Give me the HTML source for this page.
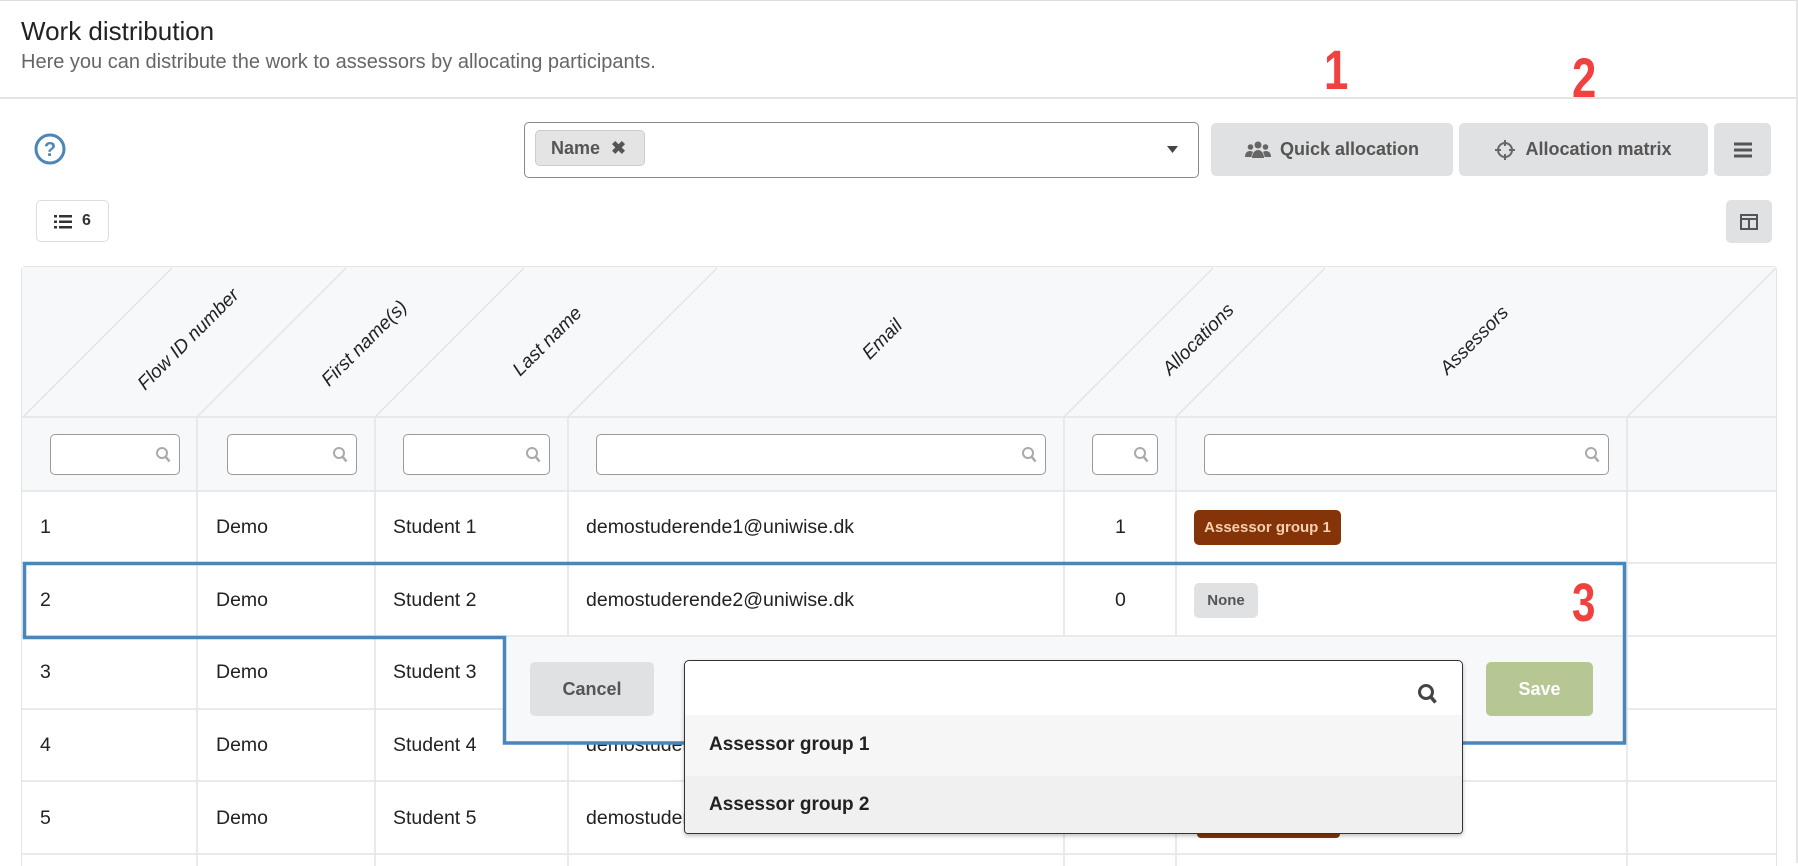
<!DOCTYPE html>
<html><head><meta charset="utf-8">
<style>
*{box-sizing:border-box;margin:0;padding:0}
body{width:1798px;height:863px;overflow:hidden;background:#fff;font-family:"Liberation Sans",sans-serif;color:#222;position:relative}
.abs{position:absolute}
.btn{position:absolute;background:#e0e1e3;border-radius:5px;color:#555;font-weight:bold;font-size:18px;display:flex;align-items:center;justify-content:center}
.inp{position:absolute;height:41px;top:434px;border:1px solid #9a9a9a;border-radius:5px;background:#fff}
.inp svg{position:absolute;right:8px;top:11px}
.cell{position:absolute;font-size:19.5px;color:#222}
.hl{position:absolute;transform:translate(-50%,-50%) rotate(-45deg);font-style:italic;font-size:19px;white-space:nowrap;color:#222}
.red{position:absolute;color:#f04040;font-weight:bold;font-size:56px;line-height:1;transform:scaleX(0.78);transform-origin:left top}
</style></head><body>
<div class="abs" style="left:0;top:0;width:1798px;height:863px;border-top:1px solid #ddd;border-right:2px solid #e6e6e6"></div>
<div class="abs" style="left:21px;top:16px;font-size:26px;color:#222">Work distribution</div>
<div class="abs" style="left:21px;top:51px;font-size:20px;color:#666">Here you can distribute the work to assessors by allocating participants.</div>
<div class="abs" style="left:0;top:97px;width:1798px;height:2px;background:#e4e4e4"></div>

<div class="red" style="left:1324px;top:42px">1</div>
<div class="red" style="left:1572px;top:50px">2</div>

<svg class="abs" style="left:34px;top:133px" width="32" height="32" viewBox="0 0 32 32"><circle cx="16" cy="16" r="14" fill="none" stroke="#4a86b8" stroke-width="3"/><text x="16" y="23" text-anchor="middle" font-family="Liberation Sans" font-weight="bold" font-size="20" fill="#4a86b8">?</text></svg>

<div class="abs" style="left:524px;top:122px;width:675px;height:56px;border:1px solid #888;border-radius:5px;background:#fff"></div>
<div class="abs" style="left:535px;top:130px;width:110px;height:36px;background:#e4e4e4;border:1px solid #ccc;border-radius:5px;font-weight:bold;font-size:18px;color:#555;padding:7px 0 0 15px">Name <span style="margin-left:6px">✖</span></div>
<svg class="abs" style="left:1167px;top:146px" width="12" height="8"><path d="M0 0h11l-5.5 7z" fill="#444"/></svg>

<div class="btn" style="left:1211px;top:123px;width:242px;height:53px"><svg width="26" height="18" viewBox="0 0 26 18" style="margin-right:9px"><g fill="#666"><circle cx="13" cy="4" r="3.5"/><circle cx="5.5" cy="6" r="2.8"/><circle cx="20.5" cy="6" r="2.8"/><path d="M7 17c0-5 3-8 6-8s6 3 6 8z"/><path d="M0 16c0-4 2-6 5-6 1.5 0 2.5.5 3 1-1 1.5-1.5 3-1.5 5z"/><path d="M26 16c0-4-2-6-5-6-1.5 0-2.5.5-3 1 1 1.5 1.5 3 1.5 5z"/></g></svg>Quick allocation</div>
<div class="btn" style="left:1459px;top:123px;width:249px;height:53px"><svg width="20" height="22" viewBox="0 0 20 22" style="margin-right:10px"><g fill="none" stroke="#666" stroke-width="2"><circle cx="10" cy="11" r="7"/><path d="M10 1v6M10 15v6M0 11h6M14 11h6"/></g></svg>Allocation matrix</div>
<div class="btn" style="left:1714px;top:123px;width:57px;height:53px"><svg width="18" height="16"><path d="M0 2h18M0 8h18M0 14h18" stroke="#555" stroke-width="3"/></svg></div>

<div class="abs" style="left:36px;top:200px;width:73px;height:42px;border:1px solid #ddd;border-radius:5px;display:flex;align-items:center;padding-left:17px;font-weight:bold;font-size:16px;color:#333"><svg width="18" height="15" style="margin-right:10px"><g fill="#333"><rect x="0" y="1" width="3" height="2.5"/><rect x="0" y="6.5" width="3" height="2.5"/><rect x="0" y="12" width="3" height="2.5"/><rect x="5" y="1" width="13" height="2.5"/><rect x="5" y="6.5" width="13" height="2.5"/><rect x="5" y="12" width="13" height="2.5"/></g></svg>6</div>
<div class="btn" style="left:1726px;top:200px;width:46px;height:43px"><svg width="18" height="16"><rect x="1" y="1" width="16" height="14" fill="none" stroke="#555" stroke-width="2"/><path d="M1 5h16M9 5v10" stroke="#555" stroke-width="2"/></svg></div>

<!-- table -->
<div class="abs" style="left:21px;top:266px;width:1756px;height:600px;border:1px solid #e3e4e6;border-bottom:none;border-radius:4px 4px 0 0"></div>
<div class="abs" style="left:22px;top:267px;width:1754px;height:224px;background:#f7f8fa"></div>
<svg class="abs" style="left:0;top:266px" width="1798" height="600">
<g stroke="#e3e4e6" stroke-width="1.5" fill="none">
<path d="M23 151L172 2M197 151L346 2M375 151L524 2M568 151L717 2M1064 151L1213 2M1176 151L1325 2M1627 151L1776 2"/>
<path d="M22 151H1776M22 225H1776M22 297H1776M22 370H1776M22 443H1776M22 515H1776M22 588H1776"/>
<path d="M197 151V600M375 151V600M568 151V600M1064 151V600M1176 151V600M1627 151V600"/>
</g></svg>
<div class="hl" style="left:189px;top:340px">Flow ID number</div>
<div class="hl" style="left:365px;top:344px">First name(s)</div>
<div class="hl" style="left:548px;top:342px">Last name</div>
<div class="hl" style="left:883px;top:340px">Email</div>
<div class="hl" style="left:1199px;top:340px">Allocations</div>
<div class="hl" style="left:1475px;top:341px">Assessors</div>

<div class="inp" style="left:50px;width:130px"><svg width="16" height="18"><circle cx="7" cy="7" r="5" fill="none" stroke="#aaa" stroke-width="2"/><path d="M10.5 10.5l4 5" stroke="#aaa" stroke-width="2.5"/></svg></div>
<div class="inp" style="left:227px;width:130px"><svg width="16" height="18"><circle cx="7" cy="7" r="5" fill="none" stroke="#aaa" stroke-width="2"/><path d="M10.5 10.5l4 5" stroke="#aaa" stroke-width="2.5"/></svg></div>
<div class="inp" style="left:403px;width:147px"><svg width="16" height="18"><circle cx="7" cy="7" r="5" fill="none" stroke="#aaa" stroke-width="2"/><path d="M10.5 10.5l4 5" stroke="#aaa" stroke-width="2.5"/></svg></div>
<div class="inp" style="left:596px;width:450px"><svg width="16" height="18"><circle cx="7" cy="7" r="5" fill="none" stroke="#aaa" stroke-width="2"/><path d="M10.5 10.5l4 5" stroke="#aaa" stroke-width="2.5"/></svg></div>
<div class="inp" style="left:1092px;width:66px"><svg width="16" height="18"><circle cx="7" cy="7" r="5" fill="none" stroke="#aaa" stroke-width="2"/><path d="M10.5 10.5l4 5" stroke="#aaa" stroke-width="2.5"/></svg></div>
<div class="inp" style="left:1204px;width:405px"><svg width="16" height="18"><circle cx="7" cy="7" r="5" fill="none" stroke="#aaa" stroke-width="2"/><path d="M10.5 10.5l4 5" stroke="#aaa" stroke-width="2.5"/></svg></div>

<!-- rows -->
<div class="cell" style="left:40px;top:516px">1</div><div class="cell" style="left:216px;top:516px">Demo</div><div class="cell" style="left:393px;top:516px">Student 1</div><div class="cell" style="left:586px;top:516px">demostuderende1@uniwise.dk</div><div class="cell" style="left:1115px;top:516px">1</div>
<div class="abs" style="left:1194px;top:510px;width:147px;height:35px;background:#853409;border-radius:5px;color:#f6cfae;font-weight:bold;font-size:15px;display:flex;align-items:center;justify-content:center">Assessor group 1</div>
<div class="cell" style="left:40px;top:589px">2</div><div class="cell" style="left:216px;top:589px">Demo</div><div class="cell" style="left:393px;top:589px">Student 2</div><div class="cell" style="left:586px;top:589px">demostuderende2@uniwise.dk</div><div class="cell" style="left:1115px;top:589px">0</div>
<div class="abs" style="left:1194px;top:583px;width:64px;height:35px;background:#e0e1e3;border-radius:5px;color:#555;font-weight:bold;font-size:15px;display:flex;align-items:center;justify-content:center">None</div>
<div class="cell" style="left:40px;top:661px">3</div><div class="cell" style="left:216px;top:661px">Demo</div><div class="cell" style="left:393px;top:661px">Student 3</div>
<div class="cell" style="left:40px;top:734px">4</div><div class="cell" style="left:216px;top:734px">Demo</div><div class="cell" style="left:393px;top:734px">Student 4</div><div class="cell" style="left:586px;top:734px">demostuderende4@uniwise.dk</div>
<div class="cell" style="left:40px;top:807px">5</div><div class="cell" style="left:216px;top:807px">Demo</div><div class="cell" style="left:393px;top:807px">Student 5</div><div class="cell" style="left:586px;top:807px">demostuderende5@uniwise.dk</div>
<div class="abs" style="left:1197px;top:818px;width:143px;height:20px;background:#853409;border-radius:4px"></div>

<!-- expansion panel -->
<div class="abs" style="left:503px;top:637px;width:1123px;height:107px;background:#f7f8fa"></div>
<svg class="abs" style="left:0;top:0" width="1798" height="863"><path d="M24.5 563.5H1624.5V743H504.5V637.5H24.5Z" fill="none" stroke="#4a86b8" stroke-width="3.5"/></svg>
<div class="red" style="left:1572px;top:576px;font-size:54px">3</div>
<div class="btn" style="left:530px;top:662px;width:124px;height:54px">Cancel</div>
<div class="btn" style="left:1486px;top:662px;width:107px;height:54px;background:#b7c793;color:#fff">Save</div>
<div class="abs" style="left:684px;top:660px;width:779px;height:174px;border:1px solid #333;border-radius:5px 5px 4px 4px;background:#fff;box-shadow:0 2px 4px rgba(0,0,0,.25);overflow:hidden">
 <svg class="abs" style="left:732px;top:22px" width="22" height="24"><circle cx="9" cy="9" r="6.5" fill="none" stroke="#444" stroke-width="3"/><path d="M13.5 13.5l5 6" stroke="#444" stroke-width="3.5"/></svg>
 <div class="abs" style="left:0;top:54px;width:779px;height:61px;background:#f6f6f6;font-weight:bold;font-size:19px;padding:19px 0 0 24px">Assessor group 1</div>
 <div class="abs" style="left:0;top:115px;width:779px;height:60px;background:#f0f0f0;font-weight:bold;font-size:19px;padding:18px 0 0 24px">Assessor group 2</div>
</div>
</body></html>
